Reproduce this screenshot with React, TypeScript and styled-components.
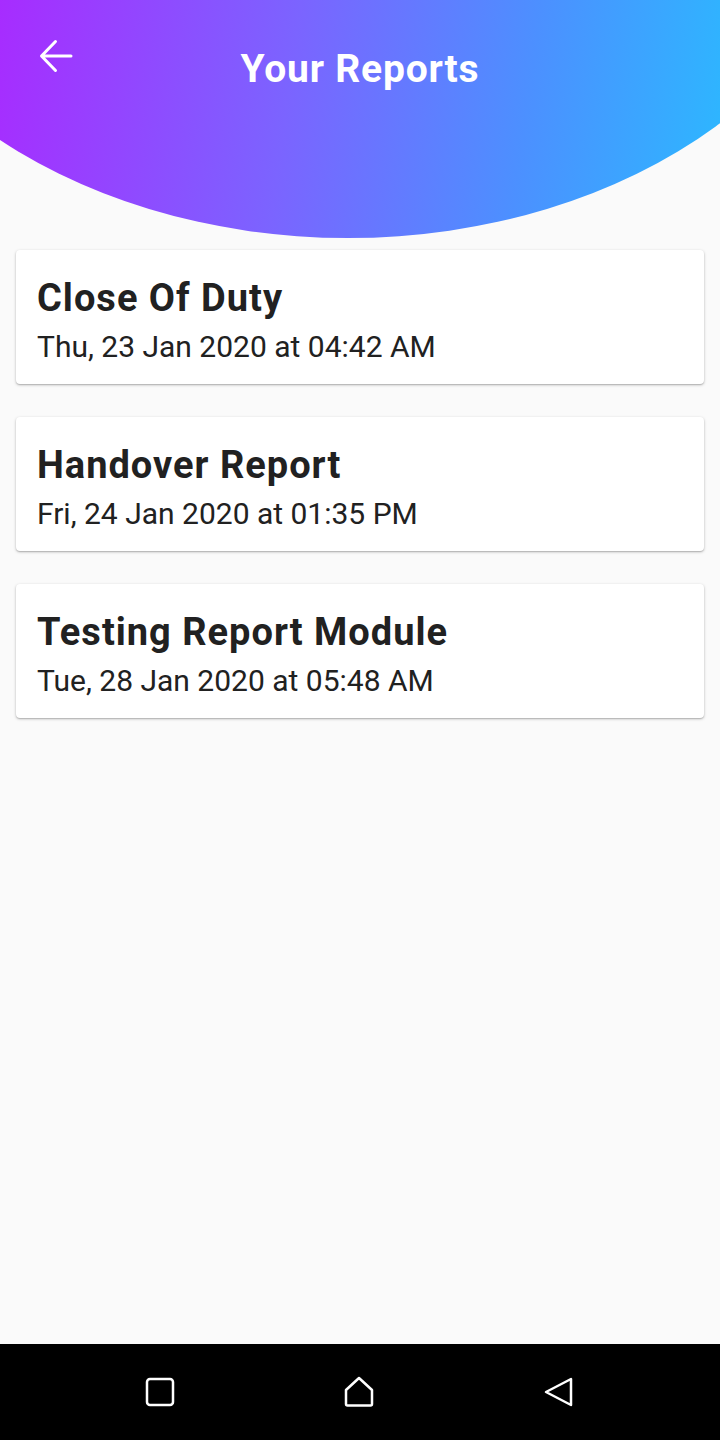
import React from "react";
import styled, { createGlobalStyle } from "styled-components";

const GlobalStyle = createGlobalStyle`
  html, body { margin: 0; padding: 0; background: #fafafa; }
  * { box-sizing: border-box; }
  body { font-family: Roboto, "Noto Sans", sans-serif; }
`;

const Screen = styled.div`
  width: 720px;
  height: 1440px;
  display: flex;
  flex-direction: column;
  background: #fafafa;
`;

const Header = styled.header`
  height: 238px;
  flex-shrink: 0;
  background: linear-gradient(98deg, #a72cff 0%, #7b64ff 40%, #4c90ff 72%, #2cb8ff 100%);
  clip-path: ellipse(520px 381px at 348px -143px);
  display: flex;
  align-items: flex-start;
  position: relative;
`;

const BackButton = styled.button`
  position: absolute;
  left: 36px;
  top: 36px;
  width: 40px;
  height: 40px;
  padding: 0;
  border: none;
  background: transparent;
  display: flex;
  align-items: center;
  justify-content: center;
`;

const Title = styled.h1`
  margin: 0;
  width: 100%;
  text-align: center;
  padding-top: 44px;
  color: #ffffff;
  font-size: 39px;
  font-weight: 700;
  letter-spacing: 0.8px;
  line-height: 50px;
`;

const List = styled.main`
  flex: 1;
  display: flex;
  flex-direction: column;
  gap: 33px;
  padding: 12px 16px 0;
`;

const Card = styled.div`
  height: 134px;
  background: #ffffff;
  border-radius: 4px;
  box-shadow: 0 1px 3px rgba(0, 0, 0, 0.25), 0 1px 1px rgba(0, 0, 0, 0.12);
  padding: 24px 21px 0;
  display: flex;
  flex-direction: column;
`;

const CardTitle = styled.div`
  color: #212121;
  font-size: 38px;
  font-weight: 700;
  letter-spacing: 1px;
  line-height: 48px;
`;

const CardDate = styled.div`
  margin-top: 7px;
  color: #212121;
  font-size: 30px;
  font-weight: 400;
  line-height: 36px;
`;

const NavBar = styled.nav`
  height: 96px;
  flex-shrink: 0;
  background: #000000;
  display: flex;
  align-items: center;
  justify-content: space-between;
  padding: 0 142px 0 140px;
`;

const NavIcon = styled.svg`
  width: 40px;
  height: 40px;
  display: block;
`;

const reports = [
  { title: "Close Of Duty", date: "Thu, 23 Jan 2020 at 04:42 AM" },
  { title: "Handover Report", date: "Fri, 24 Jan 2020 at 01:35 PM" },
  { title: "Testing Report Module", date: "Tue, 28 Jan 2020 at 05:48 AM" },
];

export default function App() {
  return (
    <>
      <GlobalStyle />
      <Screen>
        <Header>
          <BackButton aria-label="Back">
            <svg width="40" height="40" viewBox="0 0 40 40" fill="none">
              <path d="M35 20H6M19.5 5.5L5.5 20l14 14.5" stroke="#fff" strokeWidth="3" strokeLinecap="round" strokeLinejoin="round" />
            </svg>
          </BackButton>
          <Title>Your Reports</Title>
        </Header>
        <List>
          {reports.map((r) => (
            <Card key={r.title}>
              <CardTitle>{r.title}</CardTitle>
              <CardDate>{r.date}</CardDate>
            </Card>
          ))}
        </List>
        <NavBar>
          <NavIcon viewBox="0 0 40 40" fill="none">
            <rect x="7" y="7" width="26" height="26" rx="3" stroke="#fff" strokeWidth="2.5" />
          </NavIcon>
          <NavIcon viewBox="0 0 40 40" fill="none">
            <path d="M7 18L20 6l13 12v14a1.5 1.5 0 0 1-1.5 1.5h-23A1.5 1.5 0 0 1 7 32z" stroke="#fff" strokeWidth="2.5" strokeLinejoin="round" />
          </NavIcon>
          <NavIcon viewBox="0 0 40 40" fill="none">
            <path d="M33 7v26L8 20z" stroke="#fff" strokeWidth="2.5" strokeLinejoin="round" />
          </NavIcon>
        </NavBar>
      </Screen>
    </>
  );
}
